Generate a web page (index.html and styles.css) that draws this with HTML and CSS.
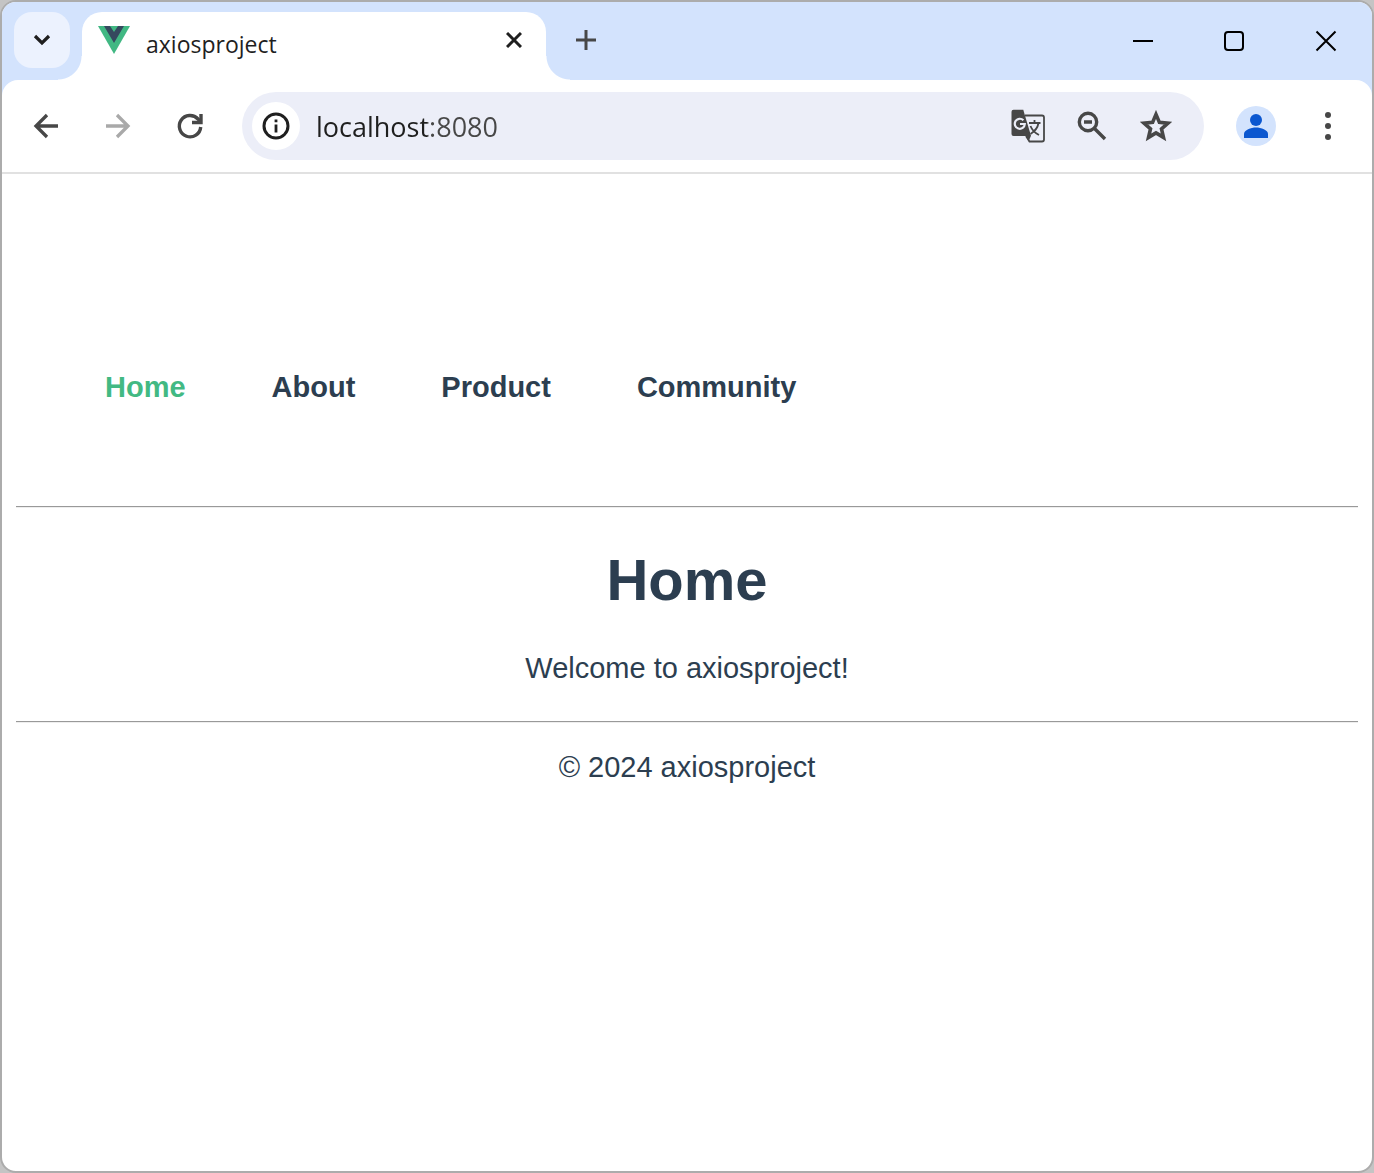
FILE: index.html
```html
<!DOCTYPE html>
<html lang="en">
<head>
<meta charset="utf-8">
<meta name="viewport" content="width=device-width, initial-scale=1">
<title>axiosproject</title>
<link rel="stylesheet" href="styles.css">
</head>
<body>
<div class="window">
  <header class="tab-strip">
    <button class="tab-search" type="button" aria-label="Search tabs">
      <svg width="20" height="20" viewBox="0 0 20 20" fill="none" stroke="#1f1f1f" stroke-width="3.200"><path d="M3 6l7 7 7-7"/></svg>
    </button>
    <div class="tab">
      <svg class="favicon" width="32" height="28" viewBox="0 0 32 28"><path fill="#41b883" d="M0 0h32L16 28z"/><path fill="#35495e" d="M6 0h6l4 6 4-6h6L16 17z"/></svg>
      <span class="tab-title">axiosproject</span>
      <button class="icon-button tab-close" type="button" aria-label="Close tab">
        <svg width="16" height="16" viewBox="0 0 16 16" fill="none" stroke="#1f1f1f" stroke-width="3"><path d="M1 1l14 14M15 1L1 15"/></svg>
      </button>
    </div>
    <button class="icon-button new-tab" type="button" aria-label="New tab">
      <svg width="20" height="20" viewBox="0 0 20 20" fill="none" stroke="#474747" stroke-width="3"><path d="M10 0v20M0 10h20"/></svg>
    </button>
    <div class="window-controls">
      <button type="button" aria-label="Minimize"><svg width="22" height="22" viewBox="0 0 22 22" fill="none" stroke="#000" stroke-width="2"><path d="M2 11h20"/></svg></button>
      <button type="button" aria-label="Maximize"><svg width="22" height="22" viewBox="0 0 22 22" fill="none" stroke="#000" stroke-width="2"><rect x="2" y="2" width="18" height="18" rx="3"/></svg></button>
      <button type="button" aria-label="Close"><svg width="22" height="22" viewBox="0 0 22 22" fill="none" stroke="#000" stroke-width="2"><path d="M1.500 1.500l19 19M20.500 1.500l-19 19"/></svg></button>
    </div>
  </header>

  <div class="toolbar-area">
    <div class="toolbar">
      <div class="history">
        <button class="icon-button" type="button" aria-label="Back">
          <svg width="28" height="28" viewBox="0 0 28 28" fill="none" stroke="#474747" stroke-width="3.300"><path d="M26 14H5M15 3L4 14l11 11"/></svg>
        </button>
        <button class="icon-button" type="button" aria-label="Forward" disabled>
          <svg width="28" height="28" viewBox="0 0 28 28" fill="none" stroke="#a9a9a9" stroke-width="3.300"><path d="M2 14h21M13 3l11 11-11 11"/></svg>
        </button>
        <button class="icon-button" type="button" aria-label="Reload">
          <svg width="28" height="28" viewBox="0 0 28 28" fill="none" stroke="#474747" stroke-width="3.400"><path d="M24.700 15A10.700 10.700 0 1 1 22 7l3 3"/><path d="M25 2v8.500H16"/></svg>
        </button>
      </div>
      <div class="address">
        <button class="site-info" type="button" aria-label="View site information">
          <svg width="28" height="28" viewBox="0 0 28 28"><circle cx="14" cy="14" r="12" fill="none" stroke="#1f1f1f" stroke-width="3"/><path fill="#1f1f1f" d="M12.600 12.500h2.800v8h-2.800zM12.600 7.500h2.800v2.800h-2.800z"/></svg>
        </button>
        <input class="url" type="text" value="localhost:8080" aria-label="Address" spellcheck="false">
        <button class="icon-button" type="button" aria-label="Translate this page">
          <svg width="36" height="36" viewBox="0 0 36 36"><path d="M15 7.500h17a2 2 0 0 1 2 2v22a2 2 0 0 1-2 2H19.500L16 28" fill="none" stroke="#474747" stroke-width="1.800"/><path d="M3.500 1.800h9.800l1.500 5.200L21 27.800 18.500 33.500 16.500 28H3.500a2 2 0 0 1-2-2V3.800a2 2 0 0 1 2-2z" fill="#474747"/><path d="M13.400 12.300A5 5 0 1 0 14.800 16H10" fill="none" stroke="#eceef8" stroke-width="2.200"/><path d="M19 15h11.500M24.500 12v3M28.500 15c-.8 5-4 8.500-8 11M20.500 18c1.500 4 4.500 7 8.500 9" fill="none" stroke="#474747" stroke-width="1.800"/></svg>
        </button>
        <button class="icon-button" type="button" aria-label="Zoom">
          <svg width="32" height="32" viewBox="0 0 32 32" fill="none" stroke="#474747" stroke-width="3.400"><circle cx="12" cy="12" r="8.700"/><path d="M18 18l11 11M8 12h8"/></svg>
        </button>
        <button class="icon-button" type="button" aria-label="Bookmark this tab">
          <svg width="32" height="32" viewBox="0 0 32 32" fill="none" stroke="#474747" stroke-width="3.600"><path d="M16 4.400l3.400 8 8.600.8-6.500 5.700 2 8.500-7.500-4.500-7.500 4.500 2-8.500L4 13.200l8.600-.8z"/></svg>
        </button>
      </div>
      <button class="profile" type="button" aria-label="Profile">
        <svg width="24" height="24" viewBox="0 0 24 24" fill="#0b57d0"><circle cx="12" cy="6" r="6"/><path d="M0 24v-4c0-4 7-6.500 12-6.500S24 16 24 20v4z"/></svg>
      </button>
      <button class="icon-button" type="button" aria-label="Menu">
        <svg width="8" height="28" viewBox="0 0 8 28" fill="#474747"><circle cx="4" cy="3" r="3"/><circle cx="4" cy="14" r="3"/><circle cx="4" cy="25" r="3"/></svg>
      </button>
    </div>
  </div>

  <div class="page">
    <nav class="site-nav" aria-label="Main">
      <a class="active" href="#home" aria-current="page">Home</a>
      <a href="#about">About</a>
      <a href="#product">Product</a>
      <a href="#community">Community</a>
    </nav>
    <hr>
    <main class="content">
      <h1>Home</h1>
      <p>Welcome to axiosproject!</p>
    </main>
    <hr>
    <footer class="site-footer">© 2024 axiosproject</footer>
  </div>
</div>
</body>
</html>
```

FILE: styles.css
```css
* {
  box-sizing: border-box;
}

body {
  margin: 0;
  background: #c4c4c4;
  font-family: "Liberation Sans", Arial, sans-serif;
}

button {
  display: grid;
  place-items: center;
  flex: none;
  padding: 0;
  border: 0;
  background: none;
}

svg {
  display: block;
}

.window {
  display: flex;
  flex-direction: column;
  min-height: 100vh;
  border: 2px solid #acacac;
  border-radius: 16px;
  background: #fff;
  overflow: hidden;
}

.tab-strip {
  display: flex;
  height: 78px;
  padding: 10px 0 0 12px;
  background: #d3e3fd;
}

.tab-search {
  width: 56px;
  height: 56px;
  margin-right: 12px;
  border-radius: 18px;
  background: #ecf2fe;
}

.tab {
  position: relative;
  display: flex;
  align-items: center;
  flex: 0 1 464px;
  padding: 0 4px 12px 16px;
  border-radius: 20px 20px 0 0;
  background: #fff;
}

/* Curved feet that join the tab to the toolbar */
.tab::before,
.tab::after {
  content: "";
  position: absolute;
  bottom: 0;
  width: 24px;
  height: 24px;
}

.tab::before {
  right: 100%;
  background: radial-gradient(circle at 0 0, transparent 23px, #fff 24px);
}

.tab::after {
  left: 100%;
  background: radial-gradient(circle at 100% 0, transparent 23px, #fff 24px);
}

.tab-title {
  flex: 1;
  padding: 8px 0 0 16px;
  color: #1f1f1f;
  font: 400 23px/32px "Open Sans", "Noto Sans", sans-serif;
}

.icon-button {
  width: 56px;
  height: 56px;
}

.new-tab {
  margin-left: 12px;
}

.window-controls {
  display: flex;
  margin-left: auto;
}

.window-controls button {
  width: 92px;
  height: 58px;
}

.toolbar-area {
  background: #d3e3fd;
}

.toolbar {
  display: flex;
  align-items: center;
  height: 94px;
  padding: 0 16px;
  border-bottom: 2px solid #e1e1e1;
  border-radius: 16px 16px 0 0;
  background: #fff;
}

.history {
  display: flex;
  gap: 16px;
  margin-right: 24px;
}

.address {
  display: flex;
  align-items: center;
  flex: 1;
  gap: 8px;
  height: 68px;
  min-width: 0;
  padding: 0 20px 0 10px;
  border-radius: 34px;
  background: #eceef8;
}

.site-info {
  width: 48px;
  height: 48px;
  border-radius: 50%;
  background: #fff;
}

/* The host is darker than the port */
.url {
  flex: 1;
  min-width: 0;
  height: 48px;
  padding: 0 0 0 8px;
  border: 0;
  background: linear-gradient(to right, #1f1f1f 119px, #474747 119px) text;
  color: transparent;
  caret-color: #1f1f1f;
  font: 400 27px/40px "Open Sans", "Noto Sans", sans-serif;
}

.profile {
  width: 40px;
  height: 40px;
  margin: 0 24px 0 32px;
  border-radius: 50%;
  background: #d3e3fd;
}

.page {
  flex: 1;
  padding: 94px 14px 32px;
  color: #2c3e50;
  font-size: 29px;
  line-height: 34px;
  text-align: center;
}

.site-nav {
  display: flex;
  flex-wrap: wrap;
  gap: 86px;
  padding: 102px 89px;
  font-weight: 700;
}

.site-nav a {
  color: #2c3e50;
  text-decoration: none;
}

.site-nav .active {
  color: #42b983;
}

hr {
  height: 2px;
  margin: 0;
  border: 0;
  border-top: 1px solid #999;
  border-bottom: 1px solid #eee;
}

.content {
  padding: 39px 0 36px;
}

h1 {
  margin: 0 0 38px;
  font-size: 58px;
  line-height: 66px;
}

p {
  margin: 0;
}

.site-footer {
  padding-top: 27px;
}
```
